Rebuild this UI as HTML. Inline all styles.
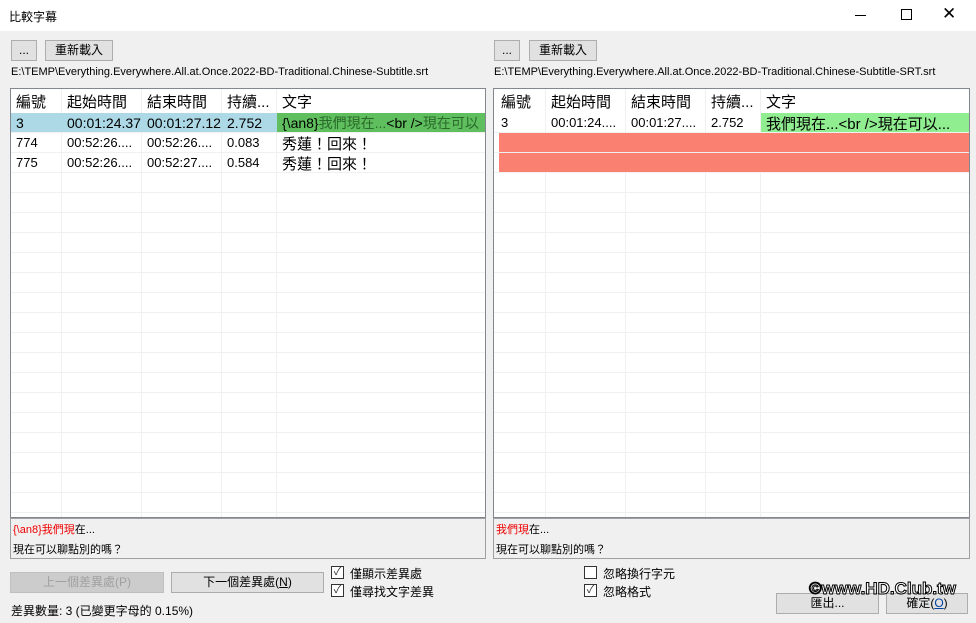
<!DOCTYPE html>
<html><head><meta charset="utf-8"><style>
*{box-sizing:border-box;margin:0;padding:0}
body{width:976px;height:623px;background:#f0f0f0;font-family:"Liberation Sans","Noto Sans CJK TC",sans-serif;font-size:12px;color:#000;position:relative;overflow:hidden}
.a{position:absolute;white-space:nowrap}
.title{left:0;top:0;width:976px;height:31px;background:#fff}
.btn{position:absolute;background:#e1e1e1;border:1px solid #adadad;text-align:center;font-size:12px}
.grid{position:absolute;background:#fff;border:1px solid #828790;overflow:hidden}
.cell{position:absolute;overflow:hidden;white-space:nowrap;padding-left:5px;font-size:13px}
.h{font-size:15px;top:2px}
.vl{position:absolute;top:0;bottom:0;width:1px;background:#f0f0f0}
.hl{position:absolute;left:0;right:0;height:1px;background:#f0f0f0}
.det{position:absolute;border:1px solid #a0a0a0;background:#f0f0f0;font-size:11px}
.cb{position:absolute;width:13px;height:13px;border:1px solid #333;background:#fff;font-size:11px;line-height:11px;text-align:center;color:#333}
</style></head><body>
<div class="a title"></div>
<div class="a" style="left:9px;top:8px;font-size:12px">比較字幕</div>
<div class="a" style="left:855px;top:15px;width:11px;height:1px;background:#000"></div>
<div class="a" style="left:901px;top:9px;width:11px;height:11px;border:1px solid #000"></div>
<div class="a" style="left:942px;top:5px;font-size:17px;line-height:18px">✕</div>

<div class="btn" style="left:11px;top:40px;width:26px;height:21px;line-height:18px">...</div>
<div class="btn" style="left:45px;top:40px;width:68px;height:21px;line-height:19px">重新載入</div>
<div class="a" style="left:11px;top:66px;font-size:11px">E:\TEMP\Everything.Everywhere.All.at.Once.2022-BD-Traditional.Chinese-Subtitle.srt</div>
<div class="btn" style="left:494px;top:40px;width:26px;height:21px;line-height:18px">...</div>
<div class="btn" style="left:529px;top:40px;width:68px;height:21px;line-height:19px">重新載入</div>
<div class="a" style="left:494px;top:66px;font-size:11px">E:\TEMP\Everything.Everywhere.All.at.Once.2022-BD-Traditional.Chinese-Subtitle-SRT.srt</div>

<!-- left grid -->
<div class="grid" style="left:10px;top:88px;width:476px;height:430px">
 <div class="vl" style="left:50px"></div><div class="vl" style="left:130px"></div><div class="vl" style="left:210px"></div><div class="vl" style="left:265px"></div>
 <div class="cell h" style="left:0">編號</div>
 <div class="cell h" style="left:51px">起始時間</div>
 <div class="cell h" style="left:131px">結束時間</div>
 <div class="cell h" style="left:211px;width:54px">持續...</div>
 <div class="cell h" style="left:266px">文字</div>
 <div class="a" style="left:0;top:24px;width:266px;height:19px;background:#add8e6"></div>
 <div class="a" style="left:266px;top:24px;width:210px;height:19px;background:#5fbf5f"></div>
 <div class="cell" style="top:26px;left:0;font-size:14px">3</div>
 <div class="cell" style="top:26px;left:51px;width:79px;font-size:14px">00:01:24.377</div>
 <div class="cell" style="top:26px;left:131px;width:79px;font-size:14px">00:01:27.129</div>
 <div class="cell" style="top:26px;left:211px;width:54px;font-size:14px">2.752</div>
 <div class="cell" style="top:24px;left:266px;width:210px;font-size:14px">{\an8}<span style="color:#2a6a2a">我們現在...</span>&lt;br /&gt;<span style="color:#2a6a2a">現在可以</span></div>
 <div class="cell" style="top:46px;left:0">774</div><div class="cell" style="top:46px;left:51px">00:52:26....</div><div class="cell" style="top:46px;left:131px">00:52:26....</div><div class="cell" style="top:46px;left:211px">0.083</div><div class="cell" style="top:44px;left:266px;font-size:15px">秀蓮！回來！</div>
 <div class="cell" style="top:66px;left:0">775</div><div class="cell" style="top:66px;left:51px">00:52:26....</div><div class="cell" style="top:66px;left:131px">00:52:27....</div><div class="cell" style="top:66px;left:211px">0.584</div><div class="cell" style="top:64px;left:266px;font-size:15px">秀蓮！回來！</div>
 <div class="hl" style="top:43px"></div><div class="hl" style="top:63px"></div><div class="hl" style="top:83px"></div><div class="hl" style="top:103px"></div><div class="hl" style="top:123px"></div><div class="hl" style="top:143px"></div><div class="hl" style="top:163px"></div><div class="hl" style="top:183px"></div><div class="hl" style="top:203px"></div><div class="hl" style="top:223px"></div><div class="hl" style="top:243px"></div><div class="hl" style="top:263px"></div><div class="hl" style="top:283px"></div><div class="hl" style="top:303px"></div><div class="hl" style="top:323px"></div><div class="hl" style="top:343px"></div><div class="hl" style="top:363px"></div><div class="hl" style="top:383px"></div><div class="hl" style="top:403px"></div><div class="hl" style="top:423px"></div>
</div>

<!-- right grid -->
<div class="grid" style="left:493px;top:88px;width:477px;height:430px">
 <div class="vl" style="left:51px"></div><div class="vl" style="left:131px"></div><div class="vl" style="left:211px"></div><div class="vl" style="left:266px"></div>
 <div class="cell h" style="left:2px">編號</div>
 <div class="cell h" style="left:52px">起始時間</div>
 <div class="cell h" style="left:132px">結束時間</div>
 <div class="cell h" style="left:212px;width:54px">持續...</div>
 <div class="cell h" style="left:267px">文字</div>
 <div class="a" style="left:267px;top:24px;width:209px;height:19px;background:#90ee90"></div>
 <div class="cell" style="top:26px;left:2px">3</div><div class="cell" style="top:26px;left:52px">00:01:24....</div><div class="cell" style="top:26px;left:132px">00:01:27....</div><div class="cell" style="top:26px;left:212px">2.752</div>
 <div class="cell" style="top:24px;left:267px;font-size:15px">我們現在...&lt;br /&gt;現在可以...</div>
 <div class="a" style="left:5px;top:44px;width:471px;height:19px;background:#fa8072"></div>
 <div class="a" style="left:5px;top:64px;width:471px;height:19px;background:#fa8072"></div>
 <div class="hl" style="top:43px"></div><div class="hl" style="top:63px"></div><div class="hl" style="top:83px"></div><div class="hl" style="top:103px"></div><div class="hl" style="top:123px"></div><div class="hl" style="top:143px"></div><div class="hl" style="top:163px"></div><div class="hl" style="top:183px"></div><div class="hl" style="top:203px"></div><div class="hl" style="top:223px"></div><div class="hl" style="top:243px"></div><div class="hl" style="top:263px"></div><div class="hl" style="top:283px"></div><div class="hl" style="top:303px"></div><div class="hl" style="top:323px"></div><div class="hl" style="top:343px"></div><div class="hl" style="top:363px"></div><div class="hl" style="top:383px"></div><div class="hl" style="top:403px"></div><div class="hl" style="top:423px"></div>
</div>

<div class="det" style="left:10px;top:518px;width:476px;height:41px">
 <div class="a" style="left:2px;top:2px"><span style="color:#e00">{\an8}我們現</span>在...</div>
 <div class="a" style="left:2px;top:22px">現在可以聊點別的嗎？</div>
</div>
<div class="det" style="left:493px;top:518px;width:477px;height:41px">
 <div class="a" style="left:2px;top:2px"><span style="color:#e00">我們現</span>在...</div>
 <div class="a" style="left:2px;top:22px">現在可以聊點別的嗎？</div>
</div>

<div class="btn" style="left:10px;top:572px;width:154px;height:21px;line-height:19px;color:#a0a0a0;background:#ccc;border-color:#bfbfbf">上一個差異處(P)</div>
<div class="btn" style="left:171px;top:572px;width:153px;height:21px;line-height:19px">下一個差異處(<u>N</u>)</div>
<div class="cb" style="left:331px;top:566px">✓</div><div class="a" style="left:350px;top:565px">僅顯示差異處</div>
<div class="cb" style="left:331px;top:584px">✓</div><div class="a" style="left:350px;top:583px">僅尋找文字差異</div>
<div class="cb" style="left:584px;top:566px"></div><div class="a" style="left:603px;top:565px">忽略換行字元</div>
<div class="cb" style="left:584px;top:584px">✓</div><div class="a" style="left:603px;top:583px">忽略格式</div>
<div class="a" style="left:11px;top:602px">差異數量: 3 (已變更字母的 0.15%)</div>
<div class="btn" style="left:776px;top:593px;width:103px;height:21px;line-height:19px">匯出...</div>
<div class="btn" style="left:886px;top:593px;width:82px;height:21px;line-height:19px">確定(<u style="color:#0040a0">O</u>)</div>
<div class="a" style="left:809px;top:579px;font-size:17px;font-weight:bold;color:#fff;-webkit-text-stroke:1px #000">©www.HD.Club.tw</div>
</body></html>
